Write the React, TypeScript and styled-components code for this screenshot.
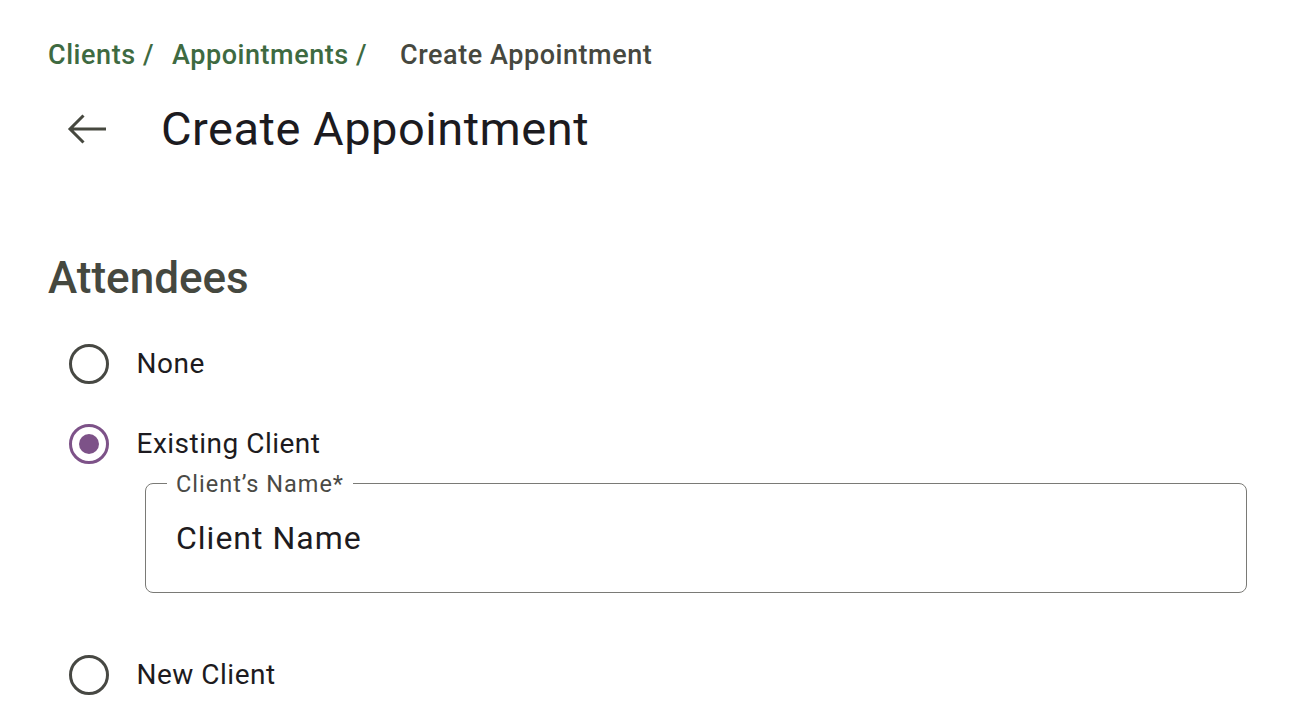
import React from "react";
import styled, { createGlobalStyle } from "styled-components";

const Global = createGlobalStyle`
  html, body { margin: 0; padding: 0; background: #ffffff; }
  body { font-family: Roboto, "Noto Sans", "Liberation Sans", sans-serif; }
  * { box-sizing: border-box; }
`;

const Page = styled.main`
  padding: 39px 57px 0 48px;
  display: flex;
  flex-direction: column;
`;

const Breadcrumbs = styled.nav`
  display: flex;
  align-items: center;
  height: 32px;
  font-size: 27px;
  line-height: 32px;
  font-weight: 500;
  letter-spacing: 0.55px;
`;

const Crumb = styled.a<{ $gap?: number; $current?: boolean }>`
  color: ${(p) => (p.$current ? "#46483f" : "#3e6a41")};
  text-decoration: none;
  margin-right: ${(p) => p.$gap ?? 0}px;
  white-space: pre;
`;

const TitleRow = styled.header`
  display: flex;
  align-items: center;
  margin-top: 29.6px;
  height: 56px;
`;

const BackButton = styled.button`
  width: 48px;
  height: 48px;
  margin-left: 16px;
  padding: 0;
  border: none;
  background: transparent;
  display: flex;
  align-items: center;
  justify-content: center;
  cursor: pointer;
`;

const Title = styled.h1`
  margin: 0 0 0 49px;
  font-size: 47px;
  line-height: 56px;
  font-weight: 400;
  letter-spacing: 0.5px;
  color: #1c1b1f;
`;

const SectionTitle = styled.h2`
  margin: 95px 0 0 0;
  font-size: 44px;
  line-height: 52px;
  font-weight: 500;
  color: #45483f;
`;

const Options = styled.div`
  display: flex;
  flex-direction: column;
  margin-top: 40.5px;
`;

const OptionRow = styled.label<{ $top?: number }>`
  display: flex;
  align-items: center;
  height: 40px;
  margin-top: ${(p) => p.$top ?? 0}px;
  padding-left: 20.5px;
  cursor: pointer;
`;

const RadioCircle = styled.span<{ $checked?: boolean }>`
  width: 40px;
  height: 40px;
  border-radius: 50%;
  border: 3px solid ${(p) => (p.$checked ? "#7d5288" : "#474843")};
  display: flex;
  align-items: center;
  justify-content: center;
  flex-shrink: 0;
`;

const RadioDot = styled.span`
  width: 20px;
  height: 20px;
  border-radius: 50%;
  background: #7d5288;
`;

const OptionText = styled.span`
  margin-left: 28px;
  font-size: 28px;
  line-height: 40px;
  letter-spacing: 0.5px;
  color: #1d1b20;
`;

const Field = styled.fieldset`
  margin: 6.7px 0 0 97px;
  padding: 0;
  border: 1.5px solid #7a7a76;
  border-radius: 8px;
  min-width: 0;
`;

const FieldLabel = styled.legend`
  margin-left: 21px;
  padding: 0 9px;
  font-size: 23.5px;
  line-height: 26px;
  letter-spacing: 1px;
  color: #4a4a45;
`;

const FieldInput = styled.input`
  display: block;
  width: 100%;
  border: none;
  outline: none;
  background: transparent;
  padding: 21px 30px 35px 30px;
  height: 95.5px;
  font-family: inherit;
  font-size: 32px;
  line-height: 38px;
  letter-spacing: 1px;
  color: #1d1b20;
  &::placeholder { color: #1d1b20; opacity: 1; }
`;

const ArrowBack = () => (
  <svg width="48" height="48" viewBox="0 0 48 48" fill="none" aria-hidden>
    <path
      d="M42 24H6M19.5 10.5L6 24l13.5 13.5"
      stroke="#46483f"
      strokeWidth="3"
      strokeLinecap="butt"
      strokeLinejoin="miter"
    />
  </svg>
);

export default function App() {
  return (
    <>
      <Global />
      <Page>
        <Breadcrumbs>
          <Crumb href="#" $gap={18}>Clients /</Crumb>
          <Crumb href="#" $gap={33}>Appointments /</Crumb>
          <Crumb $current>Create Appointment</Crumb>
        </Breadcrumbs>
        <TitleRow>
          <BackButton aria-label="Back">
            <ArrowBack />
          </BackButton>
          <Title>Create Appointment</Title>
        </TitleRow>
        <SectionTitle>Attendees</SectionTitle>
        <Options>
          <OptionRow>
            <RadioCircle />
            <OptionText>None</OptionText>
          </OptionRow>
          <OptionRow $top={40}>
            <RadioCircle $checked>
              <RadioDot />
            </RadioCircle>
            <OptionText>Existing Client</OptionText>
          </OptionRow>
          <Field>
            <FieldLabel>Client’s Name*</FieldLabel>
            <FieldInput placeholder="Client Name" />
          </Field>
          <OptionRow $top={62}>
            <RadioCircle />
            <OptionText>New Client</OptionText>
          </OptionRow>
        </Options>
      </Page>
    </>
  );
}
